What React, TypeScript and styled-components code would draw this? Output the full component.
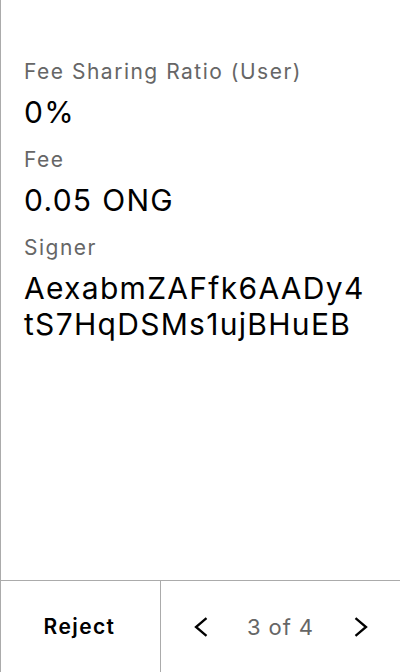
import React from "react";
import styled, { createGlobalStyle } from "styled-components";

const Global = createGlobalStyle`
  html, body { margin: 0; padding: 0; background: #fff; }
  body { font-family: Inter, "Noto Sans", sans-serif; -webkit-font-smoothing: antialiased; }
  * { box-sizing: border-box; }
`;

const Screen = styled.div`
  width: 400px;
  height: 672px;
  display: flex;
  flex-direction: column;
  border-left: 1px solid #ababab;
  background: #fff;
`;

const Content = styled.div`
  flex: 1;
  padding: 58px 30px 0 23px;
  display: flex;
  flex-direction: column;
  gap: 16px;
`;

const Field = styled.div`
  display: flex;
  flex-direction: column;
  gap: 8px;
`;

const Label = styled.div`
  font-size: 21px;
  line-height: 28px;
  letter-spacing: 1.5px;
  color: #666;
`;

const Value = styled.div`
  font-size: 30px;
  line-height: 36px;
  letter-spacing: 1.3px;
  color: #000;
  word-break: break-all;
`;

const Footer = styled.div`
  height: 92px;
  border-top: 1px solid #ababab;
  display: flex;
`;

const RejectButton = styled.button`
  width: 160px;
  border: none;
  border-right: 1px solid #ababab;
  background: none;
  font-family: inherit;
  font-size: 21px;
  font-weight: 600;
  letter-spacing: 1.4px;
  color: #000;
  padding: 0 2px 0 0;
  display: flex;
  align-items: center;
  justify-content: center;
`;

const Pager = styled.div`
  flex: 1;
  display: flex;
  align-items: center;
  justify-content: center;
  gap: 34px;
`;

const NavButton = styled.button`
  border: none;
  background: none;
  padding: 0;
  width: 24px;
  height: 24px;
  display: flex;
  align-items: center;
  justify-content: center;
  color: #000;
`;

const PageText = styled.span`
  font-size: 22px;
  letter-spacing: 0.9px;
  color: #666;
  min-width: 68px;
  text-align: center;
`;

const Chevron = ({ dir }: { dir: "left" | "right" }) => (
  <svg width="16" height="20" viewBox="0 0 16 20" fill="none">
    <path
      d={dir === "left" ? "M13.5 1.2 L3 10 L13.5 18.8" : "M2.5 1.2 L13 10 L2.5 18.8"}
      stroke="currentColor"
      strokeWidth="2.3"
      strokeLinecap="butt"
      strokeLinejoin="miter"
    />
  </svg>
);

export default function App() {
  return (
    <>
      <Global />
      <Screen>
        <Content>
          <Field>
            <Label>Fee Sharing Ratio (User)</Label>
            <Value>0%</Value>
          </Field>
          <Field>
            <Label>Fee</Label>
            <Value>0.05 ONG</Value>
          </Field>
          <Field>
            <Label>Signer</Label>
            <Value>AexabmZAFfk6AADy4tS7HqDSMs1ujBHuEB</Value>
          </Field>
        </Content>
        <Footer>
          <RejectButton>Reject</RejectButton>
          <Pager>
            <NavButton aria-label="Previous">
              <Chevron dir="left" />
            </NavButton>
            <PageText>3 of 4</PageText>
            <NavButton aria-label="Next">
              <Chevron dir="right" />
            </NavButton>
          </Pager>
        </Footer>
      </Screen>
    </>
  );
}
